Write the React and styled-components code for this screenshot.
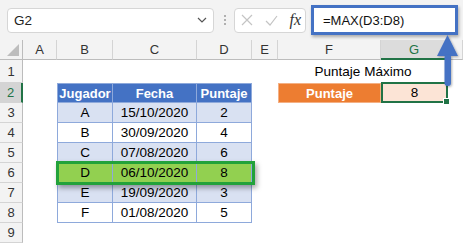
import React from 'react'
import styled, { createGlobalStyle } from 'styled-components'

const Blue = "#4472c4";
const LightBlue = "#d9e1f2";
const TableLine = "#8ea9db";
const ExcelGreen = "#217346";
const HeaderBg = "#f3f3f3";
const HeaderLine = "#d4d4d4";

const GlobalStyle = createGlobalStyle`
  html, body {
    margin: 0;
    padding: 0;
    background: #fff;
    overflow: hidden;
  }
  body {
    font-family: "Liberation Sans", Arial, sans-serif;
  }
`

const Page = styled.div`
  position: relative;
  width: 463px;
  height: 243px;
  overflow: hidden;
`

const TopBar = styled.div`
  display: flex;
  align-items: center;
  height: 40px;
  padding: 0 5px 0 7px;
  box-sizing: border-box;
  background: ${HeaderBg};
`

const NameBox = styled.div`
  display: flex;
  align-items: center;
  justify-content: space-between;
  width: 207px;
  height: 25px;
  box-sizing: border-box;
  padding: 0 6px 0 6px;
  background: #fff;
  border: 1px solid #d6d6d6;
  border-radius: 4px;
  font-size: 13.5px;
  color: #222;
`

const Dots = styled.div`
  display: flex;
  flex-direction: column;
  gap: 2px;
  margin: 0 8px 0 10px;
  span {
    width: 2px;
    height: 2px;
    background: #9a9a9a;
    border-radius: 50%;
  }
`

const FxBox = styled.div`
  display: flex;
  align-items: center;
  justify-content: space-between;
  width: 72px;
  height: 25px;
  box-sizing: border-box;
  padding: 0 4px 0 6px;
  background: #fff;
  border: 1px solid #d6d6d6;
  border-radius: 4px;
`

const Fx = styled.span`
  font-family: "Liberation Serif", serif;
  font-style: italic;
  font-size: 16px;
  color: #333;
`

const FormulaBox = styled.div`
  flex: 1;
  display: flex;
  align-items: center;
  height: 30px;
  margin-left: 5px;
  box-sizing: border-box;
  padding-left: 9px;
  background: #fff;
  border: 3px solid ${Blue};
  box-shadow: 1px 2px 3px rgba(0, 0, 0, 0.3);
  font-size: 13px;
  color: #111;
`

const Sheet = styled.div`
  display: grid;
  grid-template-columns: 23px 34px 56px 84px 55px 26px 103px 67px 1fr;
  grid-template-rows: 20px 23px repeat(8, 20px);
  font-size: 13.5px;
`

const ColHead = styled.div`
  display: flex;
  align-items: center;
  justify-content: center;
  background: ${p => (p.$active ? "#dcdcdc" : HeaderBg)};
  color: ${p => (p.$active ? ExcelGreen : "#333")};
  border-right: 1px solid ${HeaderLine};
  border-bottom: ${p => (p.$active ? `2px solid ${ExcelGreen}` : `1px solid #bcbcbc`)};
  box-sizing: border-box;
  font-size: 13px;
`

const Corner = styled(ColHead)`
  justify-content: flex-end;
  align-items: flex-end;
  padding: 0 3px 3px 0;
  border-right: 1px solid #bcbcbc;
`

const RowHead = styled.div`
  display: flex;
  align-items: center;
  justify-content: center;
  grid-column: 1;
  background: ${p => (p.$active ? "#d4d4d4" : HeaderBg)};
  color: ${p => (p.$active ? ExcelGreen : "#333")};
  border-right: ${p => (p.$active ? `2px solid ${ExcelGreen}` : `1px solid #bcbcbc`)};
  border-bottom: 1px solid ${HeaderLine};
  box-sizing: border-box;
  font-size: 13px;
`

const Cell = styled.div`
  display: flex;
  align-items: center;
  justify-content: center;
  box-sizing: border-box;
  color: #000;
  white-space: nowrap;
`

const TableCell = styled(Cell)`
  background: ${p => p.$bg || "#fff"};
  border-right: 1px solid ${TableLine};
  border-bottom: 1px solid ${TableLine};
  border-left: ${p => (p.$first ? `1px solid ${TableLine}` : "none")};
`

const TableHead = styled(TableCell)`
  background: ${Blue};
  color: #fff;
  font-weight: bold;
  font-size: 13px;
  border-top: 1px solid ${TableLine};
`

const Highlight = styled.div`
  grid-row: 7;
  grid-column: 3 / 6;
  margin: -2px -3px -2px -1px;
  border: 3px solid #22a23a;
  box-shadow: 2px 3px 5px rgba(0, 0, 0, 0.35);
  pointer-events: none;
`

const TitleCell = styled(Cell)`
  grid-row: 2;
  grid-column: 7 / 9;
`

const LabelCell = styled(Cell)`
  grid-row: 3;
  grid-column: 7;
  background: #ed7d31;
  border: 1px solid #f4b084;
  color: #fff;
  font-weight: bold;
  font-size: 13px;
`

const ResultCell = styled(Cell)`
  position: relative;
  grid-row: 3;
  grid-column: 8;
  background: #fce4d6;
  border: 2px solid ${ExcelGreen};
  margin-top: -1px;
`

const FillHandle = styled.span`
  position: absolute;
  right: -4px;
  bottom: -4px;
  width: 5px;
  height: 5px;
  background: ${ExcelGreen};
  border: 1px solid #fff;
`

const Arrow = styled.svg`
  position: absolute;
  left: 436px;
  top: 33px;
  overflow: visible;
`

const columns = ["A", "B", "C", "D", "E", "F", "G", ""];

const rows = [
  ["A", "15/10/2020", "2"],
  ["B", "30/09/2020", "4"],
  ["C", "07/08/2020", "6"],
  ["D", "06/10/2020", "8"],
  ["E", "19/09/2020", "3"],
  ["F", "01/08/2020", "5"],
];

const rowBg = (i) => {
  if (i === 3) return "#92d050";
  return i % 2 === 0 ? LightBlue : "#fff";
};

export default function App() {
  return (
    <Page>
      <GlobalStyle />
      <TopBar>
        <NameBox>
          <span>G2</span>
          <svg width="10" height="6" viewBox="0 0 10 6">
            <path d="M1 1 L5 5 L9 1" fill="none" stroke="#555" strokeWidth="1.2" />
          </svg>
        </NameBox>
        <Dots><span /><span /><span /></Dots>
        <FxBox>
          <svg width="12" height="12" viewBox="0 0 12 12">
            <path d="M1 1 L11 11 M11 1 L1 11" stroke="#c4c4c4" strokeWidth="1.2" />
          </svg>
          <svg width="13" height="11" viewBox="0 0 13 11">
            <path d="M1 6 L5 10 L12 1" fill="none" stroke="#c4c4c4" strokeWidth="1.2" />
          </svg>
          <Fx>fx</Fx>
        </FxBox>
        <FormulaBox>=MAX(D3:D8)</FormulaBox>
      </TopBar>

      <Sheet>
        <Corner>
          <svg width="12" height="12" viewBox="0 0 12 12">
            <path d="M12 0 L12 12 L0 12 Z" fill="#bdbdbd" />
          </svg>
        </Corner>
        {columns.map((c) => (
          <ColHead key={c || "H"} $active={c === "G"}>{c}</ColHead>
        ))}

        {[1, 2, 3, 4, 5, 6, 7, 8, 9].map((n) => (
          <RowHead key={n} $active={n === 2} style={{ gridRow: n + 1 }}>{n}</RowHead>
        ))}

        <TitleCell>Puntaje Máximo</TitleCell>

        <TableHead $first style={{ gridRow: 3, gridColumn: 3 }}>Jugador</TableHead>
        <TableHead style={{ gridRow: 3, gridColumn: 4 }}>Fecha</TableHead>
        <TableHead style={{ gridRow: 3, gridColumn: 5 }}>Puntaje</TableHead>

        <LabelCell>Puntaje</LabelCell>
        <ResultCell>8<FillHandle /></ResultCell>

        {rows.map((r, i) =>
          r.map((v, j) => (
            <TableCell
              key={`${i}-${j}`}
              $first={j === 0}
              $bg={rowBg(i)}
              style={{ gridRow: i + 4, gridColumn: j + 3 }}
            >
              {v}
            </TableCell>
          ))
        )}

        <Highlight />
      </Sheet>

      <Arrow width="24" height="56" viewBox="0 0 24 56">
        <defs>
          <filter id="sh" x="-50%" y="-20%" width="200%" height="150%">
            <feDropShadow dx="1" dy="1" stdDeviation="1" floodOpacity="0.3" />
          </filter>
        </defs>
        <g filter="url(#sh)" fill={Blue}>
          <path d="M11.5 2 L22 23 L1 23 Z" />
          <rect x="8.5" y="21" width="6.5" height="32" rx="3" />
        </g>
      </Arrow>
    </Page>
  )
}
